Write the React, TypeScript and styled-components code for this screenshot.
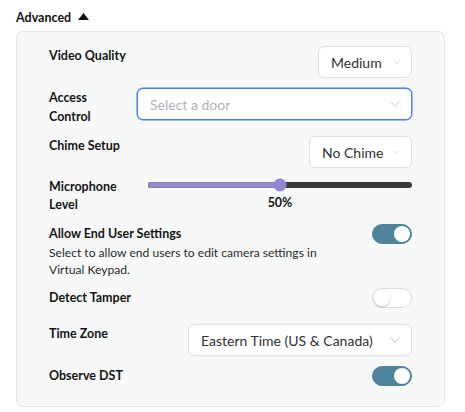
import styled, { createGlobalStyle } from 'styled-components';

const GlobalStyle = createGlobalStyle`
  body {
    margin: 0;
    background: #ffffff;
    font-family: Lato, "Open Sans", sans-serif;
    color: #1b1b1b;
  }
`;

const Chevron = () => (
  <svg width="10" height="6" viewBox="0 0 10 6">
    <polyline points="0.5,0.5 5,5.5 9.5,0.5" fill="none" stroke="#c2c5cb" strokeWidth="1" />
  </svg>
);

const Caret = () => (
  <svg width="11" height="7" viewBox="0 0 11 7">
    <polygon points="5.5,0 11,7 0,7" fill="#111" />
  </svg>
);

export default function App() {
  return (
    <Page>
      <GlobalStyle />
      <Heading>
        Advanced <Caret />
      </Heading>
      <Panel>
        <Row>
          <Label>Video Quality</Label>
          <Select $width={94}>
            <span>Medium</span>
            <Chevron />
          </Select>
        </Row>
        <Row>
          <Label $width={80}>Access Control</Label>
          <Select $grow $focused>
            <Placeholder>Select a door</Placeholder>
            <Chevron />
          </Select>
        </Row>
        <Row>
          <Label>Chime Setup</Label>
          <Select $width={103}>
            <span>No Chime</span>
            <Chevron />
          </Select>
        </Row>
        <Row>
          <Label $width={80} $lineHeight={18}>
            Microphone Level
          </Label>
          <SliderBox>
            <Track>
              <Fill style={{ width: '50%' }} />
              <Thumb style={{ left: '50%' }} />
            </Track>
            <SliderValue>50%</SliderValue>
          </SliderBox>
        </Row>
        <Row>
          <TextBlock>
            <Label>Allow End User Settings</Label>
            <Description>
              Select to allow end users to edit camera settings in Virtual Keypad.
            </Description>
          </TextBlock>
          <Toggle $on>
            <Knob $on />
          </Toggle>
        </Row>
        <Row $after={6}>
          <Label>Detect Tamper</Label>
          <Toggle>
            <Knob />
          </Toggle>
        </Row>
        <Row>
          <Label>Time Zone</Label>
          <Select $width={224}>
            <span>Eastern Time (US &amp; Canada)</span>
            <Chevron />
          </Select>
        </Row>
        <Row>
          <Label>Observe DST</Label>
          <Toggle $on>
            <Knob $on />
          </Toggle>
        </Row>
      </Panel>
    </Page>
  );
}

const Page = styled.div`
  width: 429px;
  padding: 8px 0 0 16px;
`;

const Heading = styled.div`
  display: flex;
  align-items: center;
  gap: 7px;
  font-size: 12.5px;
  font-weight: 700;
  line-height: 19px;
  color: #111;
  svg {
    margin-top: -2px;
  }
`;

const Panel = styled.div`
  margin-top: 4px;
  display: flex;
  flex-direction: column;
  gap: 10px;
  padding: 14px 32px 20px 32px;
  background: #f7f9f9;
  border: 1px solid #e1e7e8;
  border-radius: 7px;
`;

const Row = styled.div<{ $after?: number }>`
  display: flex;
  align-items: flex-start;
  justify-content: space-between;
  gap: 8px;
  margin-bottom: ${(p) => p.$after ?? 0}px;
`;

const Label = styled.div<{ $width?: number; $lineHeight?: number }>`
  flex: none;
  width: ${(p) => (p.$width ? `${p.$width}px` : 'auto')};
  font-size: 12.5px;
  font-weight: 700;
  line-height: ${(p) => p.$lineHeight ?? 19}px;
  color: #151515;
`;

const TextBlock = styled.div`
  display: flex;
  flex-direction: column;
`;

const Description = styled.div`
  max-width: 290px;
  margin-top: 1px;
  font-size: 12.1px;
  line-height: 17px;
  color: #2a2a2a;
`;

const Select = styled.div<{ $width?: number; $grow?: boolean; $focused?: boolean }>`
  box-sizing: border-box;
  display: flex;
  align-items: center;
  justify-content: space-between;
  gap: 11px;
  flex: ${(p) => (p.$grow ? '1' : 'none')};
  width: ${(p) => (p.$width ? `${p.$width}px` : 'auto')};
  height: 32px;
  padding: 0 11px 0 12px;
  background: #ffffff;
  border: 1px solid ${(p) => (p.$focused ? '#4b7ff2' : '#dcdfe3')};
  box-shadow: ${(p) => (p.$focused ? '0 0 0 0.5px #4b7ff2' : 'none')};
  border-radius: 6px;
  font-size: 14px;
  color: #303133;
  white-space: nowrap;
`;

const Placeholder = styled.span`
  color: #b0b3b8;
`;

const SliderBox = styled.div`
  flex: 1;
  display: flex;
  flex-direction: column;
  align-items: center;
  padding: 4px 0 0 11px;
`;

const Track = styled.div`
  position: relative;
  width: 100%;
  height: 6px;
  border-radius: 3px;
  background: #393939;
`;

const Fill = styled.div`
  height: 100%;
  border-radius: 3px;
  background: #9689d3;
  box-shadow: inset 0 0 0 0.5px #7a7a8a;
`;

const Thumb = styled.div`
  position: absolute;
  top: 50%;
  width: 13px;
  height: 13px;
  border-radius: 50%;
  background: #9285d2;
  transform: translate(-50%, -50%);
`;

const SliderValue = styled.div`
  margin-top: 5px;
  font-size: 12.5px;
  font-weight: 700;
  line-height: 19px;
  color: #151515;
`;

const Toggle = styled.div<{ $on?: boolean }>`
  position: relative;
  flex: none;
  box-sizing: border-box;
  width: 40px;
  height: 20px;
  border-radius: 10px;
  background: ${(p) => (p.$on ? '#4e8399' : '#ffffff')};
  border: 1px solid ${(p) => (p.$on ? '#4e8399' : '#dedede')};
`;

const Knob = styled.div<{ $on?: boolean }>`
  position: absolute;
  top: 1px;
  left: ${(p) => (p.$on ? '21px' : '1px')};
  width: 16px;
  height: 16px;
  border-radius: 50%;
  background: #ffffff;
  box-shadow: ${(p) => (p.$on ? 'none' : '0 1px 2px rgba(0,0,0,0.25)')};
`;
